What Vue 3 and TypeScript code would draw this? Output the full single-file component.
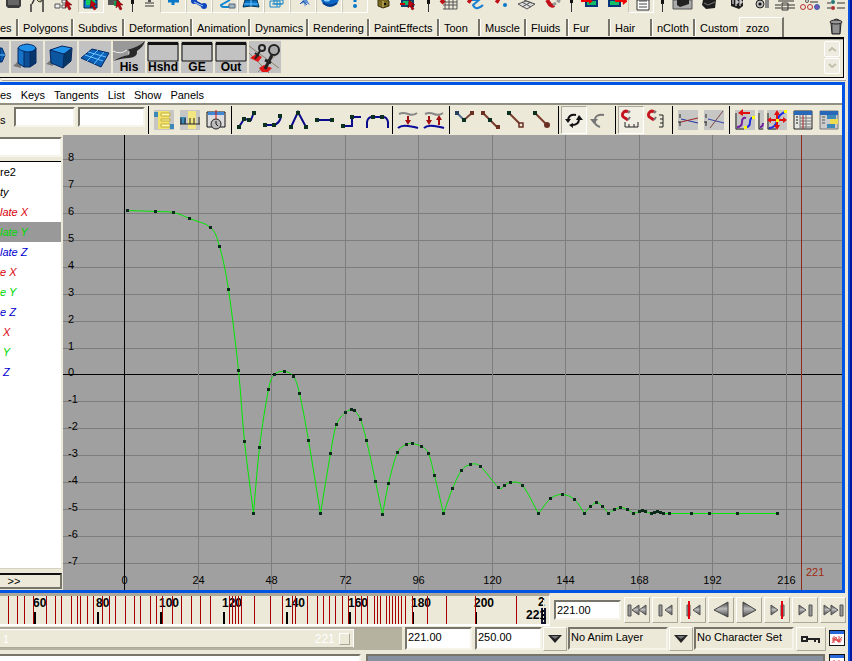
<script setup lang="ts">
import { ref } from 'vue'

type Icon = string

/* ---------- status line ---------- */
interface StatusItem { name: string; art: Icon; kind?: 'sep4' | 'sep12' | 'sep14' | 'on' }

const cursor = (x: number, y: number) =>
  `<path d="M${x} ${y}l6 5h-3l2 4-2 1-2-4-2 2z" fill="#c00010" stroke="#600" stroke-width=".5"/>`
const slot = `<path d="M2 0v3h3V0z" fill="#111"/><path d="M3.500 3v9" stroke="#333" stroke-width="1"/>`

const statusItems: StatusItem[] = [
  { name: 'Menu set', art: `<path d="M5 0h15v6l-2 2H7l-2-2z" fill="#3c3c3c"/><path d="M7 0h11v5H7z" fill="#666"/>` },
  { name: 'Scene', art: `<path d="M5 4l2-4M4 4v8M16 0v12M13 2l2-2" stroke="#333" stroke-width="1.500"/><path d="M10 0l2 2 4-2" fill="#c9c18a" stroke="#444"/>` },
  { name: 'Select by hierarchy', art: `<path d="M2 4h5v4H2zM9 0h5v3H9zM9 5h4v3H9z" fill="#eee" stroke="#555"/>${cursor(13, 0)}` },
  { name: 'Select by object', kind: 'on', art: `<path d="M5 0h13v8H5z" fill="#087fd0" stroke="#024"/><path d="M7 0h9v5H7z" fill="#12c960"/>${cursor(12, 0)}` },
  { name: 'Select by component', art: `<path d="M3 0h11v5H3z" fill="#555"/><path d="M9 1h6v5H9z" fill="#1c9a50"/>${cursor(12, 0)}` },
  { name: '', kind: 'sep4', art: `<path d="M1 0h3v4H1z" fill="#111"/><path d="M2.500 3v9" stroke="#333"/>` },
  { name: 'Mask preset', art: `<path d="M13 0h3v2h-3z" fill="#555"/><path d="M10 3h9M10 6h9" stroke="#333" stroke-width="1"/>` },
  { name: 'Handles', kind: 'on', art: `<path d="M12 0v5M7 1h11" stroke="#0879c9" stroke-width="3"/>` },
  { name: 'Joints', kind: 'on', art: `<path d="M7 1l9 5" stroke="#0b38a6" stroke-width="3"/><circle cx="7" cy="1" r="3" fill="#1147bd"/><circle cx="17" cy="6" r="3" fill="#1147bd"/><path d="M7 2l9 4" stroke="#9cc8ff"/>` },
  { name: 'Curves', kind: 'on', art: `<path d="M17 0l-9 5q0 2 3 2h9" fill="none" stroke="#0d86d2" stroke-width="2"/><path d="M16 4h6v4h-6z" fill="#9fb8c8" stroke="#567"/>` },
  { name: 'Surfaces', kind: 'on', art: `<path d="M6 0h12l2 7q-8-2-16 0z" fill="#0874c6" stroke="#035"/><path d="M12 0v6M5 4h14" stroke="#6cc4ff"/>` },
  { name: 'Deformations', kind: 'on', art: `<path d="M5 1h10v6H5zM9 0h9v4H9zM7 4h10M12 1v6" fill="none" stroke="#1784c8"/>` },
  { name: 'Dynamics', kind: 'on', art: `<path d="M12 0l-3 4 4-1 1 4 1-4 4 2-3-5z" fill="#5d8fd4"/><path d="M9 4l3-3 4 4" stroke="#2b5cae" fill="none"/>` },
  { name: 'Rendering', kind: 'on', art: `<circle cx="13" cy="-2" r="9" fill="#0e66c4"/><path d="M6 3q7 5 14 0" stroke="#033d86" stroke-width="2" fill="none"/><ellipse cx="10" cy="0" rx="3" ry="1.500" fill="#8cd0ff"/>` },
  { name: 'Miscellaneous', kind: 'on', art: `<path d="M12 0v2" stroke="#0879c9" stroke-width="3"/><circle cx="12" cy="6" r="2" fill="#0879c9"/>` },
  { name: 'Lock selection', art: `<path d="M9 0l8-1 3 2v5l-6 2-5-2z" fill="#7a6a24" stroke="#3d3410"/><path d="M14 1v6" stroke="#d8c468"/><path d="M16 3v2" stroke="#111" stroke-width="2"/>` },
  { name: 'Highlight selection', art: `<path d="M7 0h11v6H7z" fill="#15b870" stroke="#09406e" stroke-width="2"/><path d="M5 4h5" stroke="#c00" stroke-width="2"/>${cursor(14, 0)}` },
  { name: '', kind: 'sep14', art: `<path d="M7 0h3v4H7z" fill="#111"/><path d="M8.500 3v9" stroke="#333"/>` },
  { name: 'Snap to grids', art: `<path d="M10 0v9M14 0v9M18 0v9M22 0v9M8 2h14M8 5h14M8 9h14" stroke="#555"/><path d="M6 0l3 3" stroke="#c01018" stroke-width="4"/>` },
  { name: 'Snap to curves', art: `<path d="M9 0h9l-6 5q2 4 5 3t5-3" fill="none" stroke="#1a80d0" stroke-width="2"/><path d="M7 0l3 2" stroke="#c01018" stroke-width="4"/>` },
  { name: 'Snap to points', art: `<path d="M9 0l3 2" stroke="#c01018" stroke-width="4"/><circle cx="18" cy="5" r="2" fill="#0879c9"/>` },
  { name: 'Snap to view planes', art: `<path d="M5 4l8-3 9 3-8 5zM9 2l9 5M18 2l-9 5M11 0l8 3" fill="#ddd" stroke="#555"/>` },
  { name: 'Make live', art: `<path d="M8 0l2 3q2 4 5 2" fill="none" stroke="#c01018" stroke-width="4"/><path d="M14 5l3-2M18 0l3 2" stroke="#999" stroke-width="3"/>` },
  { name: '', kind: 'sep12', art: `<path d="M6 0v3h3V0z" fill="#111"/><path d="M7.500 3v9" stroke="#333"/>` },
  { name: 'Inputs', art: `<path d="M9 0h11v6H9z" fill="#11bf6b" stroke="#06357a" stroke-width="2"/><path d="M4 1h8" stroke="#e00" stroke-width="2"/><path d="M12-1l4 2-4 3z" fill="#e00"/>` },
  { name: 'Outputs', art: `<path d="M6 0h11v6H6z" fill="#11bf6b" stroke="#06357a" stroke-width="2"/><path d="M12 1h8" stroke="#e00" stroke-width="2"/><path d="M19-2l6 3-5 4z" fill="#e00"/>` },
  { name: 'Construction history', kind: 'on', art: `<path d="M8 0h12v10H8z" fill="#fff" stroke="#333"/><path d="M10 1h8M10 4h8M10 7h8" stroke="#444"/>` },
  { name: '', kind: 'sep14', art: `<path d="M7 0h3v4H7z" fill="#111"/><path d="M8.500 3v9" stroke="#333"/>` },
  { name: 'Render view', art: `<path d="M4 0h19v9H4z" fill="#aaa" stroke="#555"/><path d="M8 0h12v4l-9 3-3-2z" fill="#222"/>` },
  { name: 'Render frame', art: `<path d="M8 0h13l-1 8-9 1-4-4z" fill="#1d1d1d"/><path d="M9 3l4 2 7-3" stroke="#777" fill="none"/>` },
  { name: 'IPR render', art: `<path d="M10 0h12v6l-4 3-8-3z" fill="#1d1d1d"/><path d="M12 0v4M15 0v6M15 1h2v2h-2M19 0v6M19 1h2v2h-2" stroke="#fff" fill="none"/>` },
  { name: 'Render settings', art: `<circle cx="13" cy="4" r="4" fill="#bbb" stroke="#222"/><circle cx="13" cy="4" r="1.500" fill="#111"/><path d="M18 0h4v8h-4z" fill="#888"/>` },
  { name: 'Channel box', art: `<path d="M2 5h6M15 5h7M2 8h6M15 8h7M5 1h16M9 3h6v7H9zM9 5h6M9 8h6" fill="none" stroke="#333"/>` },
  { name: 'Tool settings', art: `<circle cx="4" cy="7" r="2.500" fill="none" stroke="#b33"/><circle cx="11" cy="7" r="2.500" fill="none" stroke="#b33"/><circle cx="18" cy="7" r="2.500" fill="#75b" stroke="#36a"/><circle cx="8" cy="1" r="1.500" fill="none" stroke="#555"/><path d="M11 2h8" stroke="#333"/>` },
  { name: 'Attribute editor', art: `<circle cx="8" cy="2" r="2" fill="#277"/><circle cx="8" cy="8" r="2" fill="#a33"/><path d="M2 3h4M2 8h4M12 3h8M12 8h8" stroke="#333"/>` },
]

/* ---------- shelf ---------- */
const tabs = ['es', 'Polygons', 'Subdivs', 'Deformation', 'Animation', 'Dynamics', 'Rendering', 'PaintEffects', 'Toon', 'Muscle', 'Fluids', 'Fur', 'Hair', 'nCloth', 'Custom', 'zozo']
const activeTab = ref('zozo')

const panelArt = `<path d="M1 2h30v18H1z" fill="#c2c2c2" stroke="#111" stroke-width="1"/><path d="M1 1h30v3H1z" fill="#111"/>`
const shelf: { name: string; caption: string; art: Icon }[] = [
  { name: 'Cylinder', caption: '', art: `<path d="M2 25l8-7v9z" fill="#777"/><path d="M7 7v15l6 4h6l6-4V7z" fill="#0c4f96"/><path d="M7 7v15l6 4V10z" fill="#1773c8"/><path d="M19 10v16l6-4V7z" fill="#083668"/><path d="M7 7q1-3 9-4 8 1 9 4-2 4-9 4-7-1-9-4z" fill="#1e8fe8" stroke="#042a66"/><path d="M7 7v15l6 4h6l6-4V7M13 10v16M19 10v16" fill="none" stroke="#042a66"/>` },
  { name: 'Cube', caption: '', art: `<path d="M1 23l7-6v8z" fill="#777"/><path d="M5 9l12-4 10 2-8 6z" fill="#2394ec"/><path d="M5 9l14 4-1 14-12-5z" fill="#0c559f"/><path d="M19 13l8-6-1 13-8 7z" fill="#083766"/><path d="M5 9l12-4 10 2-8 6zM5 9l1 13 12 5 8-7 1-13M19 13l-1 14" fill="none" stroke="#032660"/>` },
  { name: 'Plane', caption: '', art: `<path d="M2 17l11-9 17 4-8 14z" fill="#0c62b8" stroke="#042a66"/><path d="M6 14l18 6M9 11l18 5M8 20l11-11M15 23l10-12" stroke="#6cc2ff"/>` },
  { name: 'Delete history', caption: 'His', art: `<path d="M0 0h32q-2 8-12 9-8 1-4 5-8 1-16 5z" fill="#999"/><path d="M14 9q4 0 2 5Q8 15 0 20q10-3 16-3 9-1 8-7 6-4 8-10-6 6-18 9z" fill="#292929"/><path d="M0 10q8 4 14-1" stroke="#eee" fill="none"/>` },
  { name: 'Hypershade', caption: 'Hshd', art: panelArt },
  { name: 'Graph editor', caption: 'GE', art: panelArt },
  { name: 'Outliner', caption: 'Out', art: panelArt },
  { name: 'Set key', caption: '', art: `<path d="M0 5l30 22M9 31l22-21M0 12l20 20" stroke="#888068"/><path d="M1 17l6-4 6 3-4 5z" fill="#e01818"/><path d="M10 27l5-3 8 3-4 4h-6z" fill="#e01818"/><circle cx="13" cy="7" r="3" fill="none" stroke="#222" stroke-width="2"/><path d="M11 10l-5 8M6 12l4 3" stroke="#222" stroke-width="2"/><circle cx="25" cy="9" r="5" fill="#aaa" stroke="#222" stroke-width="2"/><path d="M23 14l-7 14M16 19l6 3" stroke="#222" stroke-width="3"/>` },
]

/* ---------- graph editor ---------- */
const menus = ['es', 'Keys', 'Tangents', 'List', 'Show', 'Panels']

const n = (x: number, y: number, c = '#0b3020') => `<rect x="${x - 2}" y="${y - 2}" width="4" height="4" fill="${c}"/>`
const line = (d: string, c = '#0a0a8c') => `<path d="${d}" fill="none" stroke="${c}" stroke-width="2"/>`
const pad = `<rect width="20" height="20" fill="#c6c6c4"/>`
const wave = `<path d="M1 4q4-2 9 0t9-1" fill="none" stroke="#888" stroke-width="2"/><path d="M0 18q3-3 10-2t10 2" fill="none" stroke="#0a0a9c" stroke-width="2"/>`
const arrowDown = (x: number) => `<path d="M${x} 6v7" stroke="#a01010" stroke-width="2"/><path d="M${x - 3} 10h6l-3 5z" fill="#a01010"/>`
const hook = `<path d="M7 2Q4 0 2 3t2 5l3 2" fill="none" stroke="#c41420" stroke-width="3"/><path d="M7 3l2-2M7 10l2-3" stroke="#777" stroke-width="2"/>`

const tools: { name: string; art: Icon; state?: string }[][] = [
  [
    { name: 'Move nearest picked key', art: `${pad}<path d="M4 1h11v18H4z" fill="#f1e36b"/><path d="M7 3h9v3H7zM7 9h9v2H7zM7 14h9v3H7z" fill="#fff9b0" stroke="#c3ac36"/><path d="M0 2h4v5H0zM16 14h4v5h-4z" fill="#3b88b9"/>` },
    { name: 'Insert keys', art: `${pad}<path d="M8 1h8v18H8z" fill="#f3e680"/><path d="M0 7h6v7H0z" fill="#3b88b9"/><path d="M0 14h20M1 8v6M5 8v6M10 8v6M14 8v6M19 7v7" stroke="#222"/>` },
    { name: 'Time snap', art: `<path d="M1 2h18v15H1z" fill="#ddd" stroke="#111"/><path d="M2 2h16v3H2z" fill="#3f88d8"/><circle cx="10" cy="14" r="5" fill="#bbb" stroke="#222"/><path d="M10 11v3l2 2" stroke="#111" fill="none"/><path d="M10 0v9" stroke="#d01010"/>` },
  ],
  [
    { name: 'Spline tangents', art: line('M2 17L7 9l7 1 3-8') + n(2, 17) + n(7, 9) + n(12, 10) + n(17, 3) },
    { name: 'Clamped tangents', art: line('M2 15h9q6-2 7-9') + n(2, 15) + n(11, 15) + n(17, 6) },
    { name: 'Linear tangents', art: line('M2 17L9 2l8 15') + n(2, 17) + n(9, 3) + n(17, 17) },
    { name: 'Flat tangents', art: line('M2 10h15') + n(2, 10) + n(17, 10) },
    { name: 'Step tangents', art: line('M2 16h9V7h9') + n(2, 16) + n(11, 7) },
    { name: 'Plateau tangents', art: line('M0 18v-6q1-5 5-5h11q4 0 5 5v6') + n(6, 7) + n(15, 7) },
  ],
  [
    { name: 'Buffer curve snapshot', art: wave + arrowDown(10) },
    { name: 'Swap buffer curve', art: wave + arrowDown(5) + `<path d="M15 7v8" stroke="#a01010" stroke-width="2"/><path d="M12 10h6l-3-5z" fill="#a01010"/>` },
  ],
  [
    { name: 'Break tangents', art: line('M2 3l7 7', '#55708c') + line('M9 10l8-7', '#7a4536') + n(2, 3, '#24405a') + n(9, 10) + n(17, 3, '#6b3022') },
    { name: 'Unify tangents', art: line('M2 3l14 14', '#7a3a2c') + n(2, 3, '#6b3022') + n(9, 10) + n(17, 17, '#6b3022') },
    { name: 'Free tangent weight', art: line('M2 3l12 12', '#7a3a2c') + n(2, 3) + `<path d="M12 13h4v4h-4z" fill="#ece9d8" stroke="#6b3022" stroke-width="1.500"/>` },
    { name: 'Lock tangent weight', art: line('M2 3l12 12', '#7a3a2c') + n(2, 3) + `<circle cx="14" cy="15" r="3" fill="#6b3022"/>` },
  ],
  [
    { name: 'Auto load', state: 'on', art: `<path d="M4 10q1-6 8-5M15 9q0 6-7 6" fill="none" stroke="#111" stroke-width="2"/><path d="M1 9h6l-3 4zM12 10h7l-4-5z" fill="#111"/><path d="M9 13v5l-4-3z" fill="#111"/>` },
    { name: 'Load', art: `<path d="M5 10q0-6 9-5M4 9q0 6 6 8" fill="none" stroke="#777" stroke-width="2"/><path d="M0 9h8l-4 5z" fill="#777"/>` },
  ],
  [
    { name: 'Time snapping', state: 'on', art: hook + `<path d="M4 12v5h13v-5M8 14v3M13 14v3" fill="none" stroke="#222"/>` },
    { name: 'Value snapping', art: hook + `<path d="M12 5h4v12h-4M13 9h3M13 13h3" fill="none" stroke="#222"/>` },
  ],
  [
    { name: 'Normalized display', art: `${pad}<path d="M2 4v4M2 12v4M0 12h3" stroke="#222"/><path d="M3 9l17 4" stroke="#2234a8"/><path d="M3 12l17-4" stroke="#a02525"/>` },
    { name: 'Denormalized display', art: `${pad}<path d="M2 4v4M2 12v4M0 12h3" stroke="#222"/><path d="M4 9l16 4" stroke="#3442ac"/><path d="M6 18L19 1" stroke="#7a4747"/>` },
  ],
  [
    { name: 'Pre-infinity cycle', art: `${pad}<path d="M1 3v16h8" stroke="#222" fill="none"/><path d="M2 17q5 0 5-5t4-4" stroke="#7020a0" stroke-width="2" fill="none"/><path d="M11 17q4 0 4-5t4-4" stroke="#2030e0" stroke-width="2" fill="none"/><path d="M6 3h9" stroke="#e01010" stroke-width="2"/><path d="M8-1v7L3 3z" fill="#e01010"/><path d="M9 16h3v3H9zM17 6h3v3h-3z" fill="#ff0"/>` },
    { name: 'Post-infinity cycle', state: 'wide', art: `<path d="M-9 0h6v20h-6zM0 0h20v20H0z" fill="#c6c6c4"/><path d="M-8 3v16h4M1 3v16h8" stroke="#222" fill="none"/><path d="M-7 17q3 0 3-4" stroke="#7020a0" stroke-width="2" fill="none"/><path d="M2 18q6 0 8-7t8-9" stroke="#2030e0" stroke-width="2" fill="none"/><path d="M2 10h16M10 3v15" stroke="#e01010" stroke-width="2"/><path d="M10 0l3 5H7zM10 20l3-5H7zM0 10l4-3v6zM20 10l-4-3v6z" fill="#e01010"/><path d="M9 9h3v3H9zM17 0h3v3h-3z" fill="#ff0"/>` },
    { name: 'Open dope sheet', art: `<path d="M1 1h18v18H1z" fill="#e4e4e0" stroke="#222"/><path d="M1 1h18v4H1z" fill="#2868b8"/><path d="M7 5v14M13 5v14M7 8h12M7 11h12M7 14h12M7 17h12" stroke="#777"/><path d="M10 5v14" stroke="#a22"/><path d="M3 7h2M3 10h2M3 13h2" stroke="#111"/>` },
    { name: 'Open trax editor', art: `<path d="M1 1h18v18H1z" fill="#ccc" stroke="#777"/><path d="M1 1h18v4H1z" fill="#2868b8"/><path d="M8 5h9v4H8zM8 14h8v4H8z" fill="#3b88b9"/><path d="M11 9h8v5h-8z" fill="#f0dc50"/><path d="M3 7h3M3 10h3M3 13h3" stroke="#555"/>` },
  ],
]

const channels = [
  { text: 're2', tone: 'black' },
  { text: 'ty', tone: 'black slant' },
  { text: 'late X', tone: 'red slant' },
  { text: 'late Y', tone: 'green slant', picked: true },
  { text: 'late Z', tone: 'blue slant' },
  { text: 'e X', tone: 'red slant' },
  { text: 'e Y', tone: 'green slant' },
  { text: 'e Z', tone: 'blue slant' },
  { text: ' X', tone: 'red slant' },
  { text: ' Y', tone: 'green slant' },
  { text: ' Z', tone: 'blue slant' },
]

/* Graph space: frame 0 sits 61px from the left edge, value 0 is 240px down. */
const frames = Array.from({ length: 10 }, (_, i) => ({ label: i * 24, x: Math.round(61 + i * 73.55) + 0.5 }))
const values = Array.from({ length: 16 }, (_, i) => ({ label: 8 - i, y: Math.round(24 + i * 26.93) + 0.5 }))

const keys: [number, number][] = [
  [64, 75], [92, 76], [110, 77], [126, 83], [147, 92], [156, 111], [165, 154], [175, 235], [181, 306], [190, 378],
  [196, 312], [205, 254], [211, 239], [221, 236], [230, 241], [236, 258], [245, 305], [257, 378], [267, 318], [273, 289],
  [282, 277], [288, 274], [291, 275], [297, 284], [303, 305], [312, 346], [319, 379], [325, 348], [334, 317], [343, 309],
  [349, 308], [358, 311], [365, 318], [371, 340], [380, 378], [389, 353], [398, 335], [407, 329], [417, 331], [435, 352],
  [441, 350], [447, 347], [459, 350], [475, 378], [487, 363], [499, 359], [511, 364], [521, 378], [527, 371], [533, 367],
  [539, 371], [545, 378], [551, 374], [557, 372], [564, 374], [570, 378], [576, 376], [579, 375], [582, 376], [588, 378],
  [591, 377], [594, 376], [597, 377], [600, 378], [606, 378], [628, 378], [646, 378], [674, 378], [714, 378],
]
const isBounce = (i: number) => keys[i][1] >= 378
const slope = (i: number): [number, number] => {
  const a = keys[Math.max(0, i - 1)]
  const b = keys[Math.min(keys.length - 1, i + 1)]
  return [(b[0] - a[0]) / 6, (b[1] - a[1]) / 6]
}
const curve = keys.reduce((d, [x, y], i) => {
  if (i === 0) return `M${x + 0.5} ${y + 0.5}`
  const [px, py] = keys[i - 1]
  const s = isBounce(i - 1) ? [(x - px) / 3, (y - py) / 3] : slope(i - 1)
  const e = isBounce(i) ? [(x - px) / 3, (y - py) / 3] : slope(i)
  return `${d}C${px + s[0] + 0.5} ${py + s[1] + 0.5} ${x - e[0] + 0.5} ${y - e[1] + 0.5} ${x + 0.5} ${y + 0.5}`
}, '')

/* ---------- playback ---------- */
const keyTicks = [8, 17, 24, 33, 46, 55, 61, 71, 77, 80, 87, 93, 102, 109, 115, 125, 134, 140, 150, 156, 162, 172, 181, 191, 200, 210, 229, 232, 235, 238, 241, 254, 270, 282, 292, 295, 307, 317, 323, 329, 335, 342, 348, 355, 361, 367, 374, 377, 380, 386, 389, 392, 395, 398, 401, 405, 412, 427, 446, 475, 516]
const timeLabels = Array.from({ length: 8 }, (_, i) => ({ label: 60 + i * 20, x: 34 + i * 63 }))

const left = (x: number, h = 6) => `<path d="M${x + 8} ${13 - h}v${h * 2}l-${h + 2}-${h}z" fill="url(#metal)" stroke="#555"/>`
const right = (x: number, h = 6) => `<path d="M${x} ${13 - h}v${h * 2}l${h + 2}-${h}z" fill="url(#metal)" stroke="#555"/>`
const bar = (x: number) => `<path d="M${x} 8h3v11h-3z" fill="#999" stroke="#555"/>`
const red = (x: number) => `<path d="M${x} 4v18" stroke="#e00010" stroke-width="2"/>`
const transport = [
  { name: 'Go to start', art: bar(3) + left(6, 5) + left(13, 5) },
  { name: 'Step back one frame', art: bar(6) + left(11, 5) },
  { name: 'Step back one key', art: bar(6) + red(8) + left(11, 5) },
  { name: 'Play backwards', art: `<path d="M19 5v15L5 13z" fill="url(#metal)" stroke="#444"/>` },
  { name: 'Play forwards', art: `<path d="M6 5v15l13-7z" fill="url(#metal)" stroke="#444"/>` },
  { name: 'Step forward one key', art: right(6, 5) + bar(16) + red(17) },
  { name: 'Step forward one frame', art: right(6, 5) + bar(16) },
  { name: 'Go to end', art: right(3, 5) + right(10, 5) + bar(19) },
]
const now = ref('221.00')
const playEnd = ref('221.00')
const animEnd = ref('250.00')
const prefsArt = `<path d="M0 0h16v16H0z" fill="#111"/><path d="M1 4h14v11H1z" fill="#fff"/><path d="M1 1h14v3H1z" fill="#2868d8"/><path d="M3 13l4-6 2 5 4-5M3 8l9 4M5 6v7M10 6v7M3 10h10" stroke="#d44" fill="none"/>`
</script>

<template>
  <div class="app">
    <svg class="defs" aria-hidden="true">
      <defs>
        <linearGradient id="metal" x1="0" y1="0" x2="0" y2="1">
          <stop offset="0" stop-color="#444" /><stop offset=".45" stop-color="#bbb" /><stop offset="1" stop-color="#444" />
        </linearGradient>
      </defs>
    </svg>
    <div class="content">
      <div class="status">
        <template v-for="(s, i) in statusItems" :key="i">
          <svg v-if="s.kind && s.kind !== 'on'" :class="s.kind" height="13" v-html="s.art || slot"></svg>
          <button v-else class="status-button" :class="s.kind" :aria-label="s.name">
            <svg width="24" height="12" v-html="s.art"></svg>
          </button>
        </template>
      </div>

      <div class="tabbar">
        <div class="tabs">
          <button v-for="t in tabs" :key="t" class="tab" :class="{ active: t === activeTab }" @click="activeTab = t">{{ t }}</button>
        </div>
        <button class="trash" aria-label="Delete shelf item">
          <svg width="16" height="18">
            <path d="M3 5h10l-1 11H4z" fill="#666" stroke="#222" /><path d="M6 6v9M8 6v9M10 6v9" stroke="#bbb" />
            <ellipse cx="8" cy="4" rx="6" ry="2" fill="#999" stroke="#222" /><path d="M6 2q2-2 5 0" fill="none" stroke="#222" />
          </svg>
        </button>
      </div>

      <div class="shelf">
        <div class="shelf-items">
          <button class="shelf-item first" aria-label="Sphere">
            <svg width="9" height="32"><path d="M0 7h2l3 7-3 7H0z" fill="#0b5db0" stroke="#042a66" /><path d="M0 14h5" stroke="#6cc2ff" /></svg>
          </button>
          <button v-for="s in shelf" :key="s.name" class="shelf-item" :aria-label="s.name">
            <svg width="32" height="32" v-html="s.art"></svg>
            <span v-if="s.caption" class="caption">{{ s.caption }}</span>
          </button>
        </div>
        <div class="shelf-scroll">
          <button aria-label="Scroll up"><svg width="9" height="6"><path d="M1 5l3-3 4 3" /></svg></button>
          <button aria-label="Scroll down"><svg width="9" height="6"><path d="M1 1l3 3 4-3" /></svg></button>
        </div>
      </div>

      <section class="editor">
        <nav class="menubar">
          <button v-for="m in menus" :key="m">{{ m }}</button>
        </nav>
        <div class="toolbar">
          <label class="stats" for="stat-frame">s</label>
          <input id="stat-frame" class="sunken stat" type="text" />
          <input class="sunken stat wide" type="text" aria-label="Value" />
          <template v-for="(group, g) in tools" :key="g">
            <span class="divider"></span>
            <button v-for="t in group" :key="t.name" class="tool" :class="t.state" :aria-label="t.name">
              <svg width="20" height="20" v-html="t.art"></svg>
            </button>
          </template>
        </div>

        <div class="workspace">
          <aside class="outliner">
            <input class="sunken filter" type="text" aria-label="Filter" />
            <ul class="channels">
              <li v-for="(c, i) in channels" :key="i" :class="[c.tone, { picked: c.picked }]">{{ c.text }}</li>
            </ul>
            <button class="more">&gt;&gt;</button>
          </aside>
          <svg class="graph">
            <g class="grid">
              <line v-for="v in values" :key="v.label" x1="0" x2="100%" :y1="v.y" :y2="v.y" :class="{ axis: v.label === 0 }" />
              <line v-for="f in frames" :key="f.label" y1="0" y2="100%" :x1="f.x" :x2="f.x" :class="{ axis: f.label === 0 }" />
            </g>
            <line class="now" x1="738.5" x2="738.5" y1="0" y2="100%" />
            <path class="curve" :d="curve" />
            <rect v-for="(k, i) in keys" :key="i" :x="k[0] - 1" :y="k[1] - 1" width="3" height="3" class="key" />
            <text v-for="v in values" :key="v.label" x="5" :y="v.y + 1">{{ v.label }}</text>
            <text v-for="f in frames" :key="f.label" :x="f.x" y="449" text-anchor="middle">{{ f.label }}</text>
            <text class="now-label" x="743" y="441">221</text>
          </svg>
        </div>
      </section>

      <div class="time-row">
        <div class="timeline">
          <svg width="100%" height="28">
            <rect v-for="t in timeLabels" :key="t.label" :x="t.x" y="16" width="2" height="12" />
            <text v-for="t in timeLabels" :key="t.label" :x="t.x - 1" y="11">{{ t.label }}</text>
            <path v-for="k in keyTicks" :key="k" :d="`M${k + 0.5} 0v28`" class="tick" />
            <text x="538" y="10">2</text>
            <rect x="541" y="12" width="5" height="16" class="head" />
            <text x="526" y="23">221</text>
            <path d="M543.500 0v28" class="head-line" />
          </svg>
          <input class="scrub" type="range" min="48" max="221" value="221" aria-label="Current time" />
        </div>
        <input v-model="now" class="sunken now-field" type="text" aria-label="Current frame" />
        <div class="transport">
          <button v-for="b in transport" :key="b.name" class="raised" :aria-label="b.name"><svg width="24" height="26" v-html="b.art"></svg></button>
        </div>
      </div>

      <div class="range-row">
        <div class="range">
          <div class="range-bar"><span>1</span><span class="range-end">221</span><i></i></div>
          <input class="scrub" type="range" min="1" max="250" value="221" aria-label="Playback range" />
        </div>
        <input v-model="playEnd" class="sunken range-field" type="text" aria-label="Playback end" />
        <input v-model="animEnd" class="sunken range-field" type="text" aria-label="Animation end" />
        <button class="raised drop" aria-label="Animation layers"><svg width="16" height="10"><path d="M1 1h14L8 9z" fill="#222" /><path d="M4 2h8L8 5z" fill="#777" /></svg></button>
        <select class="sunken choice" aria-label="Animation layer"><option>No Anim Layer</option></select>
        <button class="raised drop" aria-label="Character sets"><svg width="16" height="10"><path d="M1 1h14L8 9z" fill="#222" /><path d="M4 2h8L8 5z" fill="#777" /></svg></button>
        <select class="sunken choice" aria-label="Character set"><option>No Character Set</option></select>
        <button class="raised auto-key" aria-label="Auto key">
          <svg width="22" height="12"><path d="M2 4h5v4H2zM7 6h13M15 6v3M19 6v4" fill="none" stroke="#222" stroke-width="2" /></svg>
        </button>
        <button class="prefs" aria-label="Animation preferences"><svg width="16" height="16" v-html="prefsArt"></svg></button>
      </div>

      <div class="command-row">
        <input class="sunken command" type="text" aria-label="Command" />
        <output class="result"></output>
        <button class="prefs" aria-label="Script editor"><svg width="16" height="16" v-html="prefsArt"></svg></button>
      </div>
    </div>
    <div class="frame"></div>
  </div>
</template>

<style>
body { background: #ece9d8; }
</style>

<style scoped>
* { box-sizing: border-box; }
.app { display: flex; height: 100vh; min-height: 400px; overflow: hidden; background: #ece9d8; font: 11px/14px "Liberation Sans", Arial, sans-serif; color: #000; }
.defs { position: absolute; width: 0; height: 0; }
.content { flex: 1; min-width: 0; display: flex; flex-direction: column; }
.frame { width: 4px; flex: none; background: linear-gradient(90deg, #0a52e0 0 50%, #0018a0 50%); }
button { font: inherit; color: inherit; background: none; border: 0; padding: 0; margin: 0; }
svg { display: block; }
input, select { font: inherit; color: inherit; border-radius: 0; margin: 0; min-width: 0; }
.sunken { background: #fff; border: 2px solid; border-color: #77756a #f6f4ea #f6f4ea #77756a; padding: 0 1px; }
.raised { background: #ece9d8; border: 1px solid; border-color: #fff #aca899 #aca899 #fff; display: flex; align-items: center; justify-content: center; }

.status { display: flex; flex: none; height: 15px; overflow: hidden; }
.status > * { flex: none; }
.status-button { width: 26px; height: 13px; border: 1px solid transparent; border-top: 0; overflow: hidden; }
.status-button.on { border-color: #fff; border-left-color: #cbc7b4; }
.sep4 { width: 4px; }
.sep12 { width: 12px; }
.sep14 { width: 14px; }

.tabbar { display: flex; flex: none; justify-content: space-between; height: 22px; padding-right: 4px; }
.tabs { display: grid; grid-template-columns: 18px 55px 51px 68px 58px 58px 61px 70px 41px 46px 42px 42px 42px 43px 44px 45px; padding-top: 2px; }
.tab { margin: 2px 0 1px; padding: 0 0 0 4px; text-align: left; white-space: nowrap; border-right: 2px solid #77756a; border-left: 1px solid #fff; line-height: 16px; }
.tab:first-child { padding: 0; border-left: 0; }
.tab:nth-last-child(2) { border-right: 0; }
.tab.active { margin: 0; padding-left: 6px; border-top: 1px solid #fff; }
.trash { width: 16px; margin-top: 1px; }

.shelf { display: flex; flex: none; justify-content: space-between; height: 41px; margin: 0 4px 4px 0; padding: 2px 3px 0 0; border-top: 2px solid #000; border-right: 1px solid #000; border-bottom: 1px solid #000; box-shadow: inset 0 1px #aca899, 2px 2px #f8f6ee, 2px 3px #aca899; }
.shelf-items { display: flex; gap: 2px; }
.shelf-item { position: relative; width: 32px; height: 32px; background: #c2c2c2; }
.shelf-item.first { width: 9px; }
.caption { position: absolute; left: 0; right: 0; bottom: 0; text-align: center; font-weight: bold; font-size: 12px; line-height: 12px; }
.shelf-scroll { display: flex; flex-direction: column; gap: 1px; }
.shelf-scroll button { width: 16px; height: 16px; border: 1px solid #fff; border-radius: 2px; background: #eeece1; display: grid; place-items: center; }
.shelf-scroll path { fill: none; stroke: #c2bfac; stroke-width: 2; }

.editor { flex: 1; min-height: 0; display: flex; flex-direction: column; margin-right: 3px; border: solid #0054e3; border-width: 3px 3px 3px 0; }
.menubar { display: flex; flex: none; gap: 9px; height: 20px; background: #fff; border-bottom: 2px solid #918f82; }
.menubar button { line-height: 20px; height: 18px; }
.toolbar { display: flex; flex: none; align-items: center; height: 30px; overflow: hidden; }
.stats { width: 14px; }
.stat { width: 62px; height: 20px; margin-bottom: 6px; }
.stat.wide { width: 67px; margin-left: 3px; margin-right: 1px; }
.divider { flex: none; width: 1px; height: 28px; margin: 0 2px; background: #000; }
.tool { flex: none; width: 26px; height: 28px; display: grid; place-items: center; }
.tool svg { overflow: visible; }
.tool.on { border: 1px solid; border-color: #aca899 #fff #fff #aca899; background: #f1efe4; }
.tool.wide { width: 32px; padding-left: 6px; }

.workspace { flex: 1; min-height: 0; display: flex; }
.outliner { flex: none; width: 63px; display: flex; flex-direction: column; padding-top: 2px; }
.filter { width: 62px; height: 20px; border-left: 0; }
.channels { flex: 1; list-style: none; margin: 4px 2px 4px 0; padding: 0; background: #fff; border-top: 1px solid #000; overflow: hidden; border-bottom: 1px solid #d6d2c2; }
.channels li { height: 20px; line-height: 20px; white-space: pre; }
.slant { font-style: italic; }
.red { color: #d8000c; }
.green { color: #00d800; }
.blue { color: #0000d0; }
.picked { background: #999; }
.more { flex: none; width: 62px; height: 16px; margin-bottom: 1px; padding-right: 32px; border-top: 2px solid #111; border-right: 2px solid #77756a; border-bottom: 2px solid #77756a; line-height: 13px; }
.graph { flex: 1; min-width: 0; height: 100%; background: #a0a0a0; }
.graph line { stroke: #7d7d7d; shape-rendering: crispEdges; }
.graph line.axis { stroke: #000; }
.graph line.now { stroke: #8f2a18; }
.curve { fill: none; stroke: #00e800; stroke-width: 1; }
.key { fill: #0b2a1a; }
.now-label { fill: #a02a10; }

.time-row { display: flex; flex: none; align-items: center; height: 33px; padding-right: 2px; }
.timeline { position: relative; flex: 1; height: 33px; border-top: 3px solid #aca899; border-right: 1px solid #fff; border-bottom: 2px solid #fff; overflow: hidden; }
.timeline text { font: bold 12px "Liberation Sans", Arial, sans-serif; }
.tick { stroke: #a80000; }
.head { fill: #14142c; }
.head-line { stroke: #ece9d8; stroke-dasharray: 2 2; }
.scrub { position: absolute; inset: 0; width: 100%; height: 100%; opacity: 0; }
.now-field { width: 67px; height: 20px; margin: 0 3px 0 4px; }
.transport { display: flex; gap: 2px; }
.transport .raised { width: 26px; height: 26px; }

.range-row { display: flex; flex: none; align-items: center; height: 25px; padding-right: 3px; }
.range { position: relative; flex: 1; height: 23px; background: #b5b2a0; border-top: 2px solid #aca899; }
.range-bar { display: flex; align-items: center; width: 88%; height: 19px; padding: 0 3px; background: #ece9d8; border: 1px solid #fff; border-left: 0; border-bottom-color: #aca899; color: #fff; }
.range-end { margin-left: auto; font-size: 12px; }
.range-bar i { width: 11px; height: 12px; margin-left: 4px; border: 1px solid; border-color: #fff #aca899 #aca899 #fff; }
.range-field { width: 67px; height: 23px; margin-left: 3px; padding-bottom: 4px; }
.drop { width: 24px; height: 24px; margin: 0 1px; }
.choice { width: 100px; height: 23px; appearance: none; background: #ece9d8; padding-bottom: 4px; }
.auto-key { width: 30px; height: 24px; margin: 0 3px 0 2px; }
.prefs { flex: none; width: 16px; }
.range-row .prefs { margin-bottom: 2px; }

.command-row { display: flex; flex: none; height: 10px; padding: 3px 3px 0 0; overflow: hidden; }
.command { width: 361px; height: 20px; border-left: 0; }
.result { flex: 1; height: 20px; margin: 0 4px 0 5px; background: #8791a0; border: 2px solid #77756a; }
</style>
